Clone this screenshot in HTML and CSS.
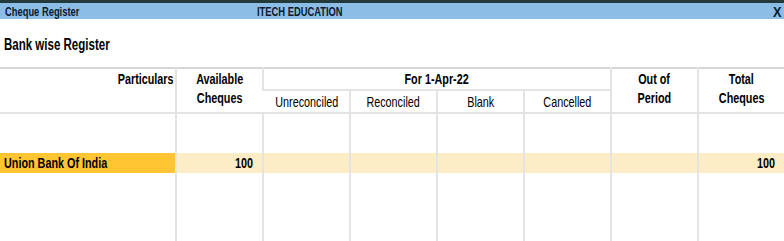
FILE: index.html
```html
<!DOCTYPE html>
<html lang="en">
<head>
  <meta charset="UTF-8">
  <title>Cheque Register</title>
  <link rel="stylesheet" href="styles.css">
</head>
<body>
  <div class="topline"></div>
  <div class="titlebar">
    <span class="title"><span class="nar">Cheque Register</span></span>
    <span class="company"><span class="nar">ITECH EDUCATION</span></span>
    <span class="close">X</span>
  </div>

  <h2 class="subtitle"><span class="nar">Bank wise Register</span></h2>

  <table class="register">
    <colgroup>
      <col class="c-part">
      <col class="c-num">
      <col class="c-num">
      <col class="c-num">
      <col class="c-num">
      <col class="c-num">
      <col class="c-num">
      <col>
    </colgroup>
    <thead>
      <tr class="head1">
        <th rowspan="2" class="part-head"><span class="nar right">Particulars</span></th>
        <th rowspan="2" class="bold"><span class="nar">Available</span><br><span class="nar">Cheques</span></th>
        <th colspan="4" class="bold group"><span class="nar">For 1-Apr-22</span></th>
        <th rowspan="2" class="bold"><span class="nar">Out of</span><br><span class="nar">Period</span></th>
        <th rowspan="2" class="bold"><span class="nar">Total</span><br><span class="nar">Cheques</span></th>
      </tr>
      <tr class="head2">
        <th><span class="nar">Unreconciled</span></th>
        <th><span class="nar">Reconciled</span></th>
        <th><span class="nar">Blank</span></th>
        <th><span class="nar">Cancelled</span></th>
      </tr>
    </thead>
    <tbody>
      <tr class="gap"><td></td><td></td><td></td><td></td><td></td><td></td><td></td><td></td></tr>
      <tr class="selected">
        <td class="name"><span class="nar">Union Bank Of India</span></td>
        <td class="num"><span class="nar right">100</span></td>
        <td></td><td></td><td></td><td></td><td></td>
        <td class="num"><span class="nar right">100</span></td>
      </tr>
      <tr class="fill"><td></td><td></td><td></td><td></td><td></td><td></td><td></td><td></td></tr>
    </tbody>
  </table>
</body>
</html>
```

FILE: styles.css
```css
body {
  margin: 0;
  font-family: "Liberation Sans", Arial, sans-serif;
  color: #000;
  background: #fff;
  width: 784px;
  height: 241px;
  overflow: hidden;
}

/* no narrow font here, so squeeze the text by hand */
.nar {
  display: inline-block;
  transform: scaleX(0.72);
  transform-origin: center;
  white-space: nowrap;
}

.title .nar,
.company .nar,
.subtitle .nar,
.name .nar {
  transform-origin: left;
}

.nar.right {
  transform-origin: right;
}

.topline {
  height: 3px;
  background: #243a3a;
}

.titlebar {
  height: 16px;
  background: #8bbde6;
  display: flex;
  align-items: center;
  font-size: 13px;
  font-weight: bold;
  color: #0a1a2a;
}

.title {
  padding-left: 5px;
  width: 252px;
}

.company {
  flex: 1;
}

.close {
  font-size: 15px;
  padding-right: 2px;
  transform: scaleX(0.85);
}

.subtitle {
  margin: 0;
  padding: 16px 0 0 4px;
  height: 31px;
  box-sizing: border-box;
  font-size: 16px;
  line-height: 20px;
  font-weight: bold;
}

.register {
  border-collapse: collapse;
  table-layout: fixed;
  width: 784px;
  margin-top: 17px;
  border-top: 2px solid #d6d6d6;
}

.c-part { width: 176px; }
.c-num { width: 87px; }

.register th,
.register td {
  border-left: 2px solid #e4e4e4;
  padding: 0;
  font-size: 15px;
}

.register th:first-child,
.register td:first-child {
  border-left: none;
}

.register th {
  font-weight: normal;
  vertical-align: top;
  line-height: 21px;
}

.register th.bold,
.register th.part-head {
  font-weight: bold;
}

.register th.part-head {
  text-align: right;
  padding-right: 1px;
}

.head1 th {
  height: 20px;
  line-height: 19px;
}

.head1 th.group {
  border-bottom: 2px solid #e4e4e4;
}

.head2 th {
  height: 20px;
  line-height: 21px;
}

thead {
  border-bottom: 2px solid #e4e4e4;
}

.gap td {
  height: 39px;
}

.selected td {
  height: 20px;
  line-height: 20px;
  background: #fdedc6;
  font-weight: bold;
}

.selected td.name {
  background: #ffc533;
  padding-left: 4px;
}

.selected td.num {
  text-align: right;
  padding-right: 9px;
}

.fill td {
  height: 70px;
}
```
